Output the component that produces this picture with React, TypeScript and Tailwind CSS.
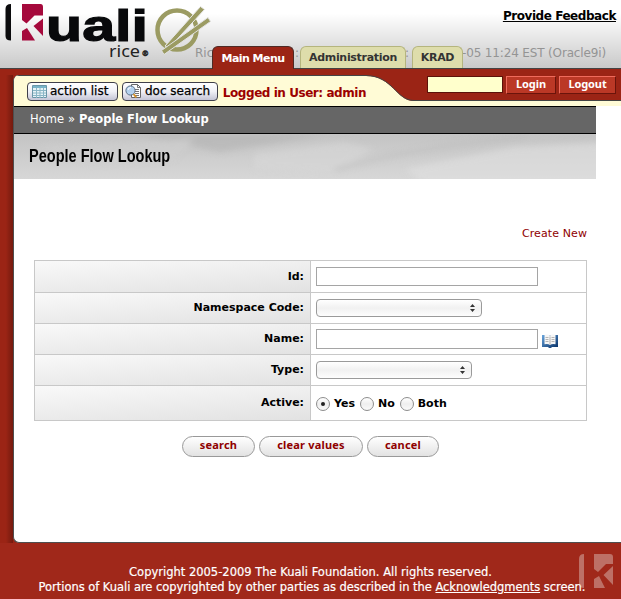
import type { ReactNode } from 'react';

function KualiLogo() {
  return (
    <svg className="absolute left-0 top-0" width="215" height="68" viewBox="0 0 215 68">
      <path d="M11 4 Q5.500 4 5.500 9 V36 Q5.500 40.500 11 40.500 Z" fill="#0b0b0d" />
      <path d="M22 4 H40.500 Q43 4 43 7 V15.500 H34.500 L26.500 23.500 L22 20 Z" fill="#a5093c" />
      <path d="M43 18.500 V36 L33.500 26 Z" fill="#a5093c" />
      <path d="M22 31 L27 28 L35 40.500 H22 Z" fill="#a5093c" />
      <text x="46" y="40.500" fontFamily="Liberation Sans" fontWeight="700" fontSize="45" textLength="102" lengthAdjust="spacingAndGlyphs" fill="#08090b" stroke="#08090b" strokeWidth="1.200">uali</text>
      <text x="109" y="56.500" fontFamily="Noto Sans" fontSize="17" textLength="31" lengthAdjust="spacingAndGlyphs" fill="#222">rice</text>
      <text x="141.500" y="56" fontFamily="DejaVu Sans" fontWeight="700" fontSize="7.500" fill="#222" stroke="#222" strokeWidth=".4">®</text>
      <circle cx="177" cy="30" r="19.500" stroke="#9b9b62" strokeWidth="4.500" fill="none" />
      <path d="M200.500 6.500L204.500 9.500L169 48L165 46Z" fill="#9b9b62" stroke="#e9e9e9" strokeWidth="1" />
      <path d="M208 17.500L210.500 21.500L164 54.500L161.500 50.500Z" fill="#9b9b62" stroke="#e2e2e2" strokeWidth="1" />
    </svg>
  );
}

function ActionIcon() {
  return (
    <svg width="15" height="13" viewBox="0 0 15 13" className="shrink-0">
      <path d="M.5 .5h14v12H.5z" fill="#e8f3f7" stroke="#6a96a8" />
      <path d="M1 1h13v2H1z" fill="#79b3c8" />
      <path d="M1 5.500h13M1 8h13M1 10.500h13M4.500 3v10M8 3v10M11.500 3v10" stroke="#8ab6c6" />
    </svg>
  );
}

function DocSearchIcon() {
  return (
    <svg width="17" height="16" viewBox="0 0 17 16" className="shrink-0">
      <path d="M6.500 1.500h6l3 3v10h-9z" fill="#fff" stroke="#666" />
      <path d="M12.500 1.500v3h3M10 6.500h4M10 8.500h4M10 10.500h4M10 12.500h4" fill="none" stroke="#666" strokeWidth=".9" />
      <circle cx="5.500" cy="7.500" r="4.600" fill="#b5d2ee" stroke="#5a6f86" />
      <path d="M3 7a3 3 0 0 1 3-2.500" fill="none" stroke="#fff" />
      <path d="M8.500 11l2.800 3.500" stroke="#d5922b" strokeWidth="2" />
    </svg>
  );
}

function BookIcon() {
  return (
    <svg width="16" height="14" viewBox="0 0 16 14">
      <defs>
        <linearGradient id="book" x1="0" y1="0" x2="1" y2="1">
          <stop offset="0" stopColor="#69a5dc" />
          <stop offset="1" stopColor="#062f66" />
        </linearGradient>
      </defs>
      <path d="M0 1h16v12h-6l-1 1H7l-1-1H0z" fill="url(#book)" />
      <path d="M2.500 1q3.500-1 5.500 .6 2-1.600 5.500-.6v9.300q-3.500-.8-5.500 .7-2-1.500-5.500-.7z" fill="#f6f6f6" />
      <path d="M3.500 3.500h3M3.500 5.500h3M3.500 7.500h3M9.500 3.500h3M9.500 5.500h3M9.500 7.500h3M8 2.500v8" stroke="#b4b4b4" />
    </svg>
  );
}

function ToolButton({ icon, className, children }: { icon: ReactNode; className: string; children: ReactNode }) {
  return (
    <button className={`flex h-[19px] items-center rounded-[4px] border border-[#3f3f4a] bg-linear-to-b from-white via-[#f0f0f6] to-[#c5c5d6] text-[12px] text-black [-webkit-text-stroke:0.25px_black] ${className}`}>
      {icon}
      <span className="ml-[3px] whitespace-nowrap pb-px leading-none">{children}</span>
    </button>
  );
}

function Row({ label, height, children }: { label: string; height: string; children: ReactNode }) {
  return (
    <div className={`flex border-b border-[#c8c8c8] ${height}`}>
      <div className="flex w-[276px] items-center justify-end border-r border-[#c8c8c8] bg-[linear-gradient(176deg,#f9f9f9,#e2e2e2)] pr-[6px] pt-px font-bold">{label}</div>
      <div className="flex flex-1 items-center pl-[5px]">{children}</div>
    </div>
  );
}

function SelectBox({ className }: { className: string }) {
  return (
    <div className={`flex h-[18px] items-center justify-end rounded-[4px] border border-[#9a9a9a] bg-linear-to-b from-white via-[#f1f1f1] to-[#fdfdfd] pr-[6px] ${className}`}>
      <svg width="5" height="8" viewBox="0 0 5 8">
        <path d="M0 3L2.500 0L5 3zM0 5h5L2.500 8z" fill="#333" />
      </svg>
    </div>
  );
}

function Radio({ checked = false }: { checked?: boolean }) {
  return (
    <span className="flex size-[14px] items-center justify-center rounded-full border border-[#8d8d8d] bg-linear-to-b from-white via-[#eeeeee] to-[#fafafa]">
      {checked && <span className="size-1 rounded-full bg-[#222]" />}
    </span>
  );
}

function PillButton({ className, children }: { className: string; children: ReactNode }) {
  return (
    <button className={`h-[21px] rounded-full border border-[#999] bg-linear-to-b from-white to-[#e2e2e2] pb-[4px] font-['Noto_Sans',sans-serif] text-[11px] font-bold leading-none tracking-[0.2px] text-[#8f0000] ${className}`}>
      {children}
    </button>
  );
}

function RedButton({ className, children }: { className: string; children: ReactNode }) {
  return (
    <button className={`ml-[3px] h-[18px] border border-b-[#6b140b] border-l-[#f06b5c] border-r-[#6b140b] border-t-[#f06b5c] bg-[#bb3826] pb-[3px] font-['Noto_Sans',sans-serif] text-[11px] font-bold leading-none tracking-[-0.1px] text-white ${className}`}>
      {children}
    </button>
  );
}

function Tab({ className, children }: { className: string; children: ReactNode }) {
  return (
    <div className={`flex items-center justify-center rounded-t-[6px] border border-b-0 pt-[2px] text-[11px] font-bold whitespace-nowrap ${className}`}>
      {children}
    </div>
  );
}

export default function App() {
  return (
    <div className="h-[599px] w-[621px] overflow-hidden bg-white font-['DejaVu_Sans',Verdana,sans-serif] text-[11px] text-black">
      <header className="relative flex h-[69px] items-end border-b border-[#444] bg-linear-to-b from-white from-20% to-[#c9c9c9] pl-[212px]">
        <span className="absolute left-[195px] top-[46px] text-[12px] leading-[14px] text-[#949494]">Ric</span>
        <span className="absolute left-[295px] top-[46px] text-[12px] leading-[14px] text-[#949494]">:</span>
        <span className="absolute left-[405px] top-[46px] text-[12px] leading-[14px] text-[#949494]">:</span>
        <span className="absolute left-[462px] top-[46px] whitespace-nowrap text-[12px] leading-[14px] tracking-[-0.15px] text-[#949494]">-05 11:24 EST (Oracle9i)</span>
        <KualiLogo />
        <a className="absolute right-[5px] top-[9px] whitespace-nowrap text-[12px] font-bold leading-[14px] tracking-[-0.44px] underline">Provide Feedback</a>
        <nav className="relative flex items-end">
          <Tab className="-mb-px h-[23px] w-[82px] border-[#4d2a25] bg-[#9b2415] text-white tracking-[-0.55px]">Main Menu</Tab>
          <Tab className="ml-[6px] h-[22px] w-[106px] border-[#b5b57e] bg-[#deddab] text-[#333] tracking-[-0.3px]">Administration</Tab>
          <Tab className="ml-[6px] h-[22px] w-[51px] border-[#b5b57e] bg-[#deddab] text-[#333] tracking-[-0.3px]">KRAD</Tab>
        </nav>
      </header>

      <div className="flex h-[474px] bg-[#9b2415]">
        <div className="mt-[6px] w-[13px] bg-linear-to-r from-[#9b2415] from-45% to-[#741a0e]" />
        <main className="mt-[6px] flex flex-1 flex-col overflow-hidden rounded-l-[6px] border-b border-l border-[#4e4e4e] bg-white">
          <div className="flex h-[31px] bg-[#fffbd6]">
            <div className="flex w-[352px] items-center border-t border-[#444] pl-[13px]">
              <ToolButton className="w-[91px] pl-1" icon={<ActionIcon />}>action list</ToolButton>
              <ToolButton className="ml-1 w-[96px] pl-[2px]" icon={<DocSearchIcon />}>doc search</ToolButton>
              <span className="ml-[5px] mt-[3px] whitespace-nowrap text-[12px] font-bold tracking-[-0.45px] text-[#9b0000]">Logged in User: admin</span>
            </div>
            <svg width="48" height="27" viewBox="0 0 48 27" className="shrink-0">
              <path d="M0 0H48V26C30 26 27 1 0 1Z" fill="#9b2415" />
              <path d="M0 .5C27 1 30 25.500 48 25.500" fill="none" stroke="#444" />
            </svg>
            <div className="flex h-[26px] flex-1 items-start border-b border-[#444] bg-[#9b2415] pl-[13px] pt-px">
              <div className="h-[17px] w-[76px] border border-[#5c120a] bg-[#ffffcc]" />
              <RedButton className="w-[50px]">Login</RedButton>
              <RedButton className="w-[57px]">Logout</RedButton>
            </div>
          </div>
          <div className="flex h-[28px] w-[582px] items-center gap-1 border-y border-black bg-[#666] pl-4 text-[11.5px] text-white">
            <span>Home</span><span>»</span><strong>People Flow Lookup</strong>
          </div>
          <div className="relative flex h-[45px] w-[582px] items-center bg-linear-to-b from-[#c4c4c4] to-[#d7d7d7] pl-[15px]">
            <svg className="absolute inset-0" width="582" height="45" viewBox="0 0 582 45">
              <defs>
                <filter id="soft"><feGaussianBlur stdDeviation="3" /></filter>
              </defs>
              <g filter="url(#soft)" opacity=".6">
                <path d="M120 0L310 0L255 10L206 18L150 6Z" fill="#b2b2b2" />
                <path d="M240 20L330 8L360 15L320 38L240 35Z" fill="#d8d8d8" />
                <path d="M320 36Q390 15 510 3" fill="none" stroke="#b8b8b8" strokeWidth="3" />
                <path d="M390 35L500 13L600 8V50H410Z" fill="#e0e0e0" />
                <path d="M20 12L180 5L160 25L80 30Z" fill="#cfcfcf" />
              </g>
            </svg>
            <h1 className="relative origin-left scale-x-[0.807] whitespace-nowrap font-['Liberation_Sans',Arial,sans-serif] text-[18px] font-bold">People Flow Lookup</h1>
          </div>
          <a className="ml-auto mr-[34px] mt-[47px] leading-4 tracking-[0.1px] text-[#8f0000]">Create New</a>
          <section className="ml-5 mt-[18px] w-[553px] border border-b-0 border-[#c8c8c8]">
            <Row label="Id:" height="h-8"><div className="h-[19px] w-[222px] border border-[#a5a5a5]" /></Row>
            <Row label="Namespace Code:" height="h-[31px]"><SelectBox className="mb-px w-[166px]" /></Row>
            <Row label="Name:" height="h-[31px]">
              <div className="h-5 w-[222px] border border-[#a5a5a5]" />
              <span className="ml-1 mt-[3px]"><BookIcon /></span>
            </Row>
            <Row label="Type:" height="h-[31px]"><SelectBox className="w-[156px]" /></Row>
            <Row label="Active:" height="h-[35px]">
              <div className="flex items-center pt-px font-bold">
                <Radio checked /><span className="ml-1 mr-[5px] pt-px">Yes</span>
                <Radio /><span className="ml-1 mr-[5px] pt-px">No</span>
                <Radio /><span className="ml-1 pt-px">Both</span>
              </div>
            </Row>
          </section>
          <div className="ml-[168px] mt-[15px] flex gap-1">
            <PillButton className="w-[73px]">search</PillButton>
            <PillButton className="w-[104px]">clear values</PillButton>
            <PillButton className="w-[72px]">cancel</PillButton>
          </div>
        </main>
      </div>

      <footer className="relative h-[56px] bg-[#a0281a] pt-[22px] text-center text-[11.5px] leading-[15px] text-white [-webkit-text-stroke:0.2px_white]">
        <svg className="absolute left-[579px] top-[11px]" width="35" height="36" viewBox="0 0 35 36" fill="#bd7066">
          <path d="M5 0Q0 0 0 5V30Q0 34 5 34Z" />
          <path d="M15 0H31Q34 0 34 3V10H27L19 18L15 15ZM34 12V31L24.500 21ZM15 25L20 22L26 34H15Z" />
        </svg>
        <p className="relative">Copyright 2005-2009 The Kuali Foundation. All rights reserved.</p>
        <p className="relative ml-[3px] whitespace-nowrap tracking-[-0.04px]">Portions of Kuali are copyrighted by other parties as described in the <a className="underline">Acknowledgments</a> screen.</p>
      </footer>
    </div>
  );
}
